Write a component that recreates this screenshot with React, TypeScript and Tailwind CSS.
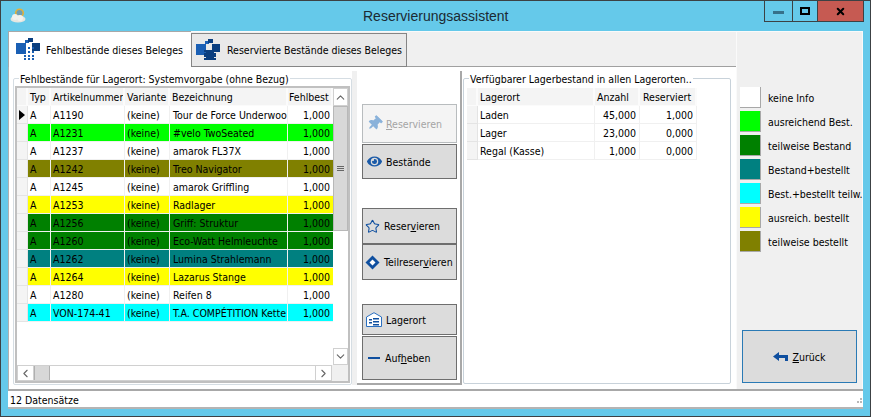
import { ChevronUp, ChevronDown, ChevronLeft, ChevronRight, Star, X } from 'lucide-react';
import { FaEye, FaThumbtack } from 'react-icons/fa';
import type { ReactNode } from 'react';

const rows = [
  { nr: 'A1190', name: 'Tour de Force Underwoo', bg: 'bg-white', current: true },
  { nr: 'A1231', name: '#velo TwoSeated', bg: 'bg-[#00ff00]' },
  { nr: 'A1237', name: 'amarok FL37X', bg: 'bg-white' },
  { nr: 'A1242', name: 'Treo Navigator', bg: 'bg-[#808000]' },
  { nr: 'A1245', name: 'amarok Griffling', bg: 'bg-white' },
  { nr: 'A1253', name: 'Radlager', bg: 'bg-[#ffff00]' },
  { nr: 'A1256', name: 'Griff: Struktur', bg: 'bg-[#008000]' },
  { nr: 'A1260', name: 'Eco-Watt Helmleuchte', bg: 'bg-[#008000]' },
  { nr: 'A1262', name: 'Lumina Strahlemann', bg: 'bg-[#008080]' },
  { nr: 'A1264', name: 'Lazarus Stange', bg: 'bg-[#ffff00]' },
  { nr: 'A1280', name: 'Reifen 8', bg: 'bg-white' },
  { nr: 'VON-174-41', name: 'T.A. COMPÉTITION Kette', bg: 'bg-[#00ffff]' },
];

const stock = [
  { ort: 'Laden', anzahl: '45,000', res: '1,000' },
  { ort: 'Lager', anzahl: '23,000', res: '0,000' },
  { ort: 'Regal (Kasse)', anzahl: '1,000', res: '0,000' },
];

const legend = [
  { label: 'keine Info', bg: 'bg-white' },
  { label: 'ausreichend Best.', bg: 'bg-[#00ff00]' },
  { label: 'teilweise Bestand', bg: 'bg-[#008000]' },
  { label: 'Bestand+bestellt', bg: 'bg-[#008080]' },
  { label: 'Best.+bestellt teilw.', bg: 'bg-[#00ffff]' },
  { label: 'ausreich. bestellt', bg: 'bg-[#ffff00]' },
  { label: 'teilweise bestellt', bg: 'bg-[#808000]' },
];

function Cloud() {
  return (
    <svg width="17" height="17" viewBox="0 0 17 17">
      <circle cx="9.5" cy="6" r="4.6" fill="#e3b23c" />
      <circle cx="9.5" cy="6" r="3" fill="#6f9fb5" />
      <ellipse cx="8" cy="12" rx="7.5" ry="3.6" fill="#e6e6e0" />
      <circle cx="5" cy="10" r="3" fill="#f2f2ee" />
      <circle cx="10" cy="11" r="3" fill="#f2f2ee" />
    </svg>
  );
}

function TabIcon({ star }: { star?: boolean }) {
  return (
    <svg width="24" height="23" viewBox="0 0 24 23" className="shrink-0">
      <rect x="0" y="5" width="10" height="11" fill="#1a5fb4" />
      <rect x="16" y="5" width="8" height="8" fill="#0b3f80" />
      <rect x="9" y="2" width="4" height="3" fill="#1a5fb4" />
      <rect x="12" y="0" width="5" height="4" fill="#0b3f80" />
      {star ? (
        <>
          <rect x="10" y="11" width="8" height="10" fill="#0b3f80" />
          <rect x="8" y="14" width="12" height="4" fill="#0b3f80" />
          <rect x="8" y="11" width="2" height="2" fill="#0b3f80" />
          <rect x="18" y="11" width="2" height="2" fill="#0b3f80" />
          <rect x="8" y="19" width="2" height="2" fill="#0b3f80" />
          <rect x="18" y="19" width="2" height="2" fill="#0b3f80" />
        </>
      ) : (
        [8, 12, 16].map(x =>
          [9, 13, 17, 20].map(y => <rect key={`${x}-${y}`} x={x} y={y} width="2" height="2" fill="#1a5fb4" />),
        )
      )}
    </svg>
  );
}

function Diamond() {
  return (
    <svg width="15" height="15" viewBox="0 0 15 15">
      <path d="M7.5 0.5 14.5 7.5 7.5 14.5 0.5 7.5Z" fill="#0f4f9f" />
      <path d="M7.5 4.5 10.5 7.5 7.5 10.5 4.5 7.5Z" fill="#fff" />
    </svg>
  );
}

function Warehouse() {
  return (
    <svg width="16" height="15" viewBox="0 0 16 15">
      <path d="M0.5 5 8 0.7 15.5 5V14.5H0.5Z" fill="#fff" stroke="#2a6fc0" />
      <path d="M3 7h3v1.5H3zM3 10h3v1.5H3zM7 6h6v1.5H7zM7 9h6v1.5H7zM7 12h6v1.5H7z" fill="#0f4f9f" />
    </svg>
  );
}

function BackArrow() {
  return (
    <svg width="15" height="10" viewBox="0 0 15 10">
      <path d="M0 4.5 6 0V3H15V9H12V6H6V9Z" fill="#0f4f9f" />
    </svg>
  );
}

function Btn({ h, icon, gap, children, off }: { h: string; icon: ReactNode; gap: string; children: ReactNode; off?: boolean }) {
  return (
    <div
      className={`flex items-center w-[95px] border whitespace-nowrap ${h} ${gap} ${
        off ? 'bg-[#f4f4f4] border-[#b8bcbe] text-[#a4a4a4]' : 'bg-[#dcdcdc] border-[#6e6e6e] text-black'
      }`}
    >
      <span className="shrink-0 flex">{icon}</span>
      <span>{children}</span>
    </div>
  );
}

function HeadCell({ children, className = '' }: { children?: ReactNode; className?: string }) {
  return <div className={`bg-[#f4f4f4] border-r-2 border-b border-[#fbfbfb] pt-px flex items-center whitespace-nowrap overflow-hidden ${className}`}>{children}</div>;
}

function ScrollBtn({ children, className = '' }: { children: ReactNode; className?: string }) {
  return <div className={`flex items-center justify-center bg-white border border-[#d0d0d0] text-[#666] ${className}`}>{children}</div>;
}

export default function App() {
  return (
    <div className="w-[871px] h-[417px] bg-[#65c9ea] border border-[#3c4144] flex flex-col overflow-hidden text-[10.5px] leading-[14px] text-black font-['DejaVu_Sans_Condensed','DejaVu_Sans',sans-serif]">
      {/* title bar */}
      <div className="h-[30px] flex shrink-0">
        <div className="w-[362px] pl-[9px] pt-[6px]">
          <Cloud />
        </div>
        <div className="flex-1 pt-[5px] text-[14px] leading-[20px] text-[#1b2a33] font-['Liberation_Sans',sans-serif]">Reservierungsassistent</div>
        <div className="flex h-[21px] mr-[6px] border-x border-b border-[#3c4144]">
          <div className="w-[28px] border-r border-[#3c4144] flex items-center justify-center">
            <div className="w-[11px] h-[3px] mt-[3px] bg-[#36708a]" />
          </div>
          <div className="w-[25px] border-r border-[#3c4144] flex items-center justify-center">
            <div className="w-[10px] h-[8px] border-2 border-black" />
          </div>
          <div className="w-[45px] bg-[#c65a52] flex items-center justify-center">
            <X size={11} strokeWidth={4.5} />
          </div>
        </div>
      </div>

      {/* client area */}
      <div className="h-[378px] mx-[7px] flex flex-col bg-[#f0f0f0]">
        <div className="h-[358px] flex">
          <div className="w-[728px] flex flex-col">
            {/* tabs */}
            <div className="h-[36px] flex items-end border-t border-[#fafafa]">
              <div className="w-[183px] h-[36px] -mt-px bg-white border-t border-l border-[#a8a8a8] flex items-center gap-[6px] pl-[7px]">
                <TabIcon />
                <span className="whitespace-nowrap">Fehlbestände dieses Beleges</span>
              </div>
              <div className="w-[216px] h-[34px] bg-[#e9e9e9] border border-[#858585] flex items-center gap-[7px] pl-[4px]">
                <TabIcon star />
                <span className="whitespace-nowrap">Reservierte Bestände dieses Beleges</span>
              </div>
              <div className="flex-1 h-[35px] border-b border-[#a0a0a0]" />
            </div>

            {/* page */}
            <div className="h-[322px] bg-white border-l border-[#b0b0b0] flex pl-[4px] pt-[4px]">
              <fieldset className="w-[339px] h-[314px] border border-[#d5dde3] rounded-[2px] px-px">
                <legend className="ml-[4px] px-px pt-px">Fehlbestände für Lagerort: Systemvorgabe (ohne Bezug)</legend>
                <div className="h-[297px] w-[335px] border-2 border-[#c0c0c0] flex flex-col">
                  <div className="flex h-[277px]">
                    <div className="w-[316px] bg-white">
                      <div className="grid grid-cols-[11px_23px_74px_45px_118px_45px] auto-rows-[18px]">
                        <HeadCell />
                        <HeadCell className="pl-[2px]">Typ</HeadCell>
                        <HeadCell className="pl-[2px]">Artikelnummer</HeadCell>
                        <HeadCell className="pl-[2px]">Variante</HeadCell>
                        <HeadCell className="pl-[2px]">Bezeichnung</HeadCell>
                        <HeadCell className="pl-[1px]">Fehlbest</HeadCell>
                        {rows.map(r => (
                          <div key={r.nr} className="contents">
                            <div className="bg-[#f4f4f4] border-r border-b border-[#e4e4e4] flex items-center">
                              {r.current && <div className="ml-[2px] border-l-[6px] border-y-[5px] border-l-black border-y-transparent" />}
                            </div>
                            <div className={`${r.bg} border-r border-b border-[#f0f0f0] pt-px flex items-center pl-[2px]`}>A</div>
                            <div className={`${r.bg} border-r border-b border-[#f0f0f0] pt-px flex items-center pl-[2px] whitespace-nowrap overflow-hidden`}>{r.nr}</div>
                            <div className={`${r.bg} border-r border-b border-[#f0f0f0] pt-px flex items-center pl-[2px]`}>(keine)</div>
                            <div className={`${r.bg} border-r border-b border-[#f0f0f0] pt-px flex items-center pl-[3px] whitespace-nowrap overflow-hidden`}>{r.name}</div>
                            <div className={`${r.bg} border-b border-[#f0f0f0] pt-px flex items-center justify-end pr-[3px]`}>1,000</div>
                          </div>
                        ))}
                      </div>
                    </div>
                    <div className="w-[16px] flex flex-col bg-white">
                      <ScrollBtn className="h-[18px]"><ChevronUp size={13} /></ScrollBtn>
                      <div className="h-[125px] bg-[#d8d8d8] border border-[#b8b8b8] flex flex-col items-center justify-center gap-px">
                        <div className="w-[7px] h-px bg-[#666]" />
                        <div className="w-[7px] h-px bg-[#666]" />
                        <div className="w-[7px] h-px bg-[#666]" />
                      </div>
                      <div className="flex-1" />
                      <ScrollBtn className="h-[17px]"><ChevronDown size={13} /></ScrollBtn>
                    </div>
                  </div>
                  <div className="flex h-[16px]">
                    <div className="w-[316px] flex bg-white border border-[#d0d0d0]">
                      <ScrollBtn className="w-[16px] border-0 border-r"><ChevronLeft size={13} /></ScrollBtn>
                      <div className="w-[16px] bg-[#d8d8d8] border-x border-[#b0b0b0]" />
                      <div className="flex-1" />
                      <ScrollBtn className="w-[16px] border-0 border-l"><ChevronRight size={13} /></ScrollBtn>
                    </div>
                    <div className="w-[16px] bg-[#f0f0f0]" />
                  </div>
                </div>
              </fieldset>

              {/* buttons between the two grids */}
              <div className="w-[5px] h-[314px] bg-[#f0f0f0]" />
              <div className="w-[105px] h-[314px] border-r-2 border-b-2 border-[#a8a8a8] pl-[5px] pt-[33px] flex flex-col">
                <Btn off h="h-[39px]" gap="gap-[4px] pl-[4px]" icon={<FaThumbtack size={15} className="rotate-45 text-[#8ab2da]" />}>
                  <u>R</u>eservieren
                </Btn>
                <Btn h="h-[35px] mt-[1px]" gap="gap-[4px] pl-[4px]" icon={<FaEye size={15} className="text-[#1a5aa8]" />}>
                  Bestände
                </Btn>
                <Btn h="h-[36px] mt-[29px]" gap="gap-[4px] pl-[2px]" icon={<Star size={15} strokeWidth={1.7} className="text-[#0f4f9f]" />}>
                  Reser<u>v</u>ieren
                </Btn>
                <Btn h="h-[36px]" gap="gap-[4px] pl-[2px]" icon={<Diamond />}>
                  Teilreser<u>v</u>ieren
                </Btn>
                <Btn h="h-[31px] mt-[24px]" gap="gap-[4px] pl-[3px]" icon={<Warehouse />}>
                  Lagerort
                </Btn>
                <Btn h="h-[44px] mt-px" gap="gap-[5px] pl-[5px]" icon={<div className="w-[12px] h-[2px] bg-[#0f4f9f]" />}>
                  Auf<u>h</u>eben
                </Btn>
              </div>

              <fieldset className="w-[268px] h-[313px] ml-[1px] border border-[#c8d2da] rounded-[2px] pl-[3px]">
                <legend className="ml-[2px] px-px pt-px">Verfügbarer Lagerbestand in allen Lagerorten..</legend>
                <div className="grid w-[230px] mt-[2px] grid-cols-[11px_117px_45px_57px] auto-rows-[18px]">
                  <HeadCell />
                  <HeadCell className="pl-[2px]">Lagerort</HeadCell>
                  <HeadCell className="pl-[2px]">Anzahl</HeadCell>
                  <HeadCell className="pl-[3px]">Reserviert</HeadCell>
                  {stock.map(s => (
                    <div key={s.ort} className="contents">
                      <div className="bg-[#f4f4f4] border-r border-b border-[#e4e4e4]" />
                      <div className="border-r border-b border-[#f0f0f0] pt-px flex items-center pl-[2px]">{s.ort}</div>
                      <div className="border-r border-b border-[#f0f0f0] pt-px flex items-center justify-end pr-[3px]">{s.anzahl}</div>
                      <div className="border-r border-b border-[#f0f0f0] pt-px flex items-center justify-end pr-[3px]">{s.res}</div>
                    </div>
                  ))}
                </div>
              </fieldset>
            </div>
          </div>

          {/* colour legend */}
          <div className="w-[127px] border-l border-t border-r border-[#fafafa] pl-[3px] pt-[55px] pr-[5px] flex flex-col">
            <div className="flex flex-col gap-[3px]">
              {legend.map(l => (
                <div key={l.label} className="flex items-center gap-[7px] h-[21px]">
                  <div className={`w-[21px] h-[21px] shrink-0 ${l.bg} border-r border-b border-[#a8a8a8]`} />
                  <span className="whitespace-nowrap">{l.label}</span>
                </div>
              ))}
            </div>
            <div className="mt-[78px] ml-[2px] w-[115px] h-[53px] bg-[#dcdcdc] border border-[#2a7ab5] flex items-center justify-center gap-[4px]">
              <BackArrow />
              <span><u>Z</u>urück</span>
            </div>
          </div>
        </div>

        {/* status bar */}
        <div className="h-[20px] bg-white border-t-2 border-b-2 border-t-[#a8a8a8] border-b-[#b4b4b4] pl-[2px] pt-[2px] flex items-center justify-between">
          <span>12 Datensätze</span>
          <div className="grid grid-cols-3 gap-px mr-[1px] mt-[1px] w-[8px]">
            <div /><div /><div className="w-[2px] h-[2px] bg-[#b8b8b8]" />
            <div /><div className="w-[2px] h-[2px] bg-[#b8b8b8]" /><div className="w-[2px] h-[2px] bg-[#b8b8b8]" />
          </div>
        </div>
      </div>
    </div>
  );
}
